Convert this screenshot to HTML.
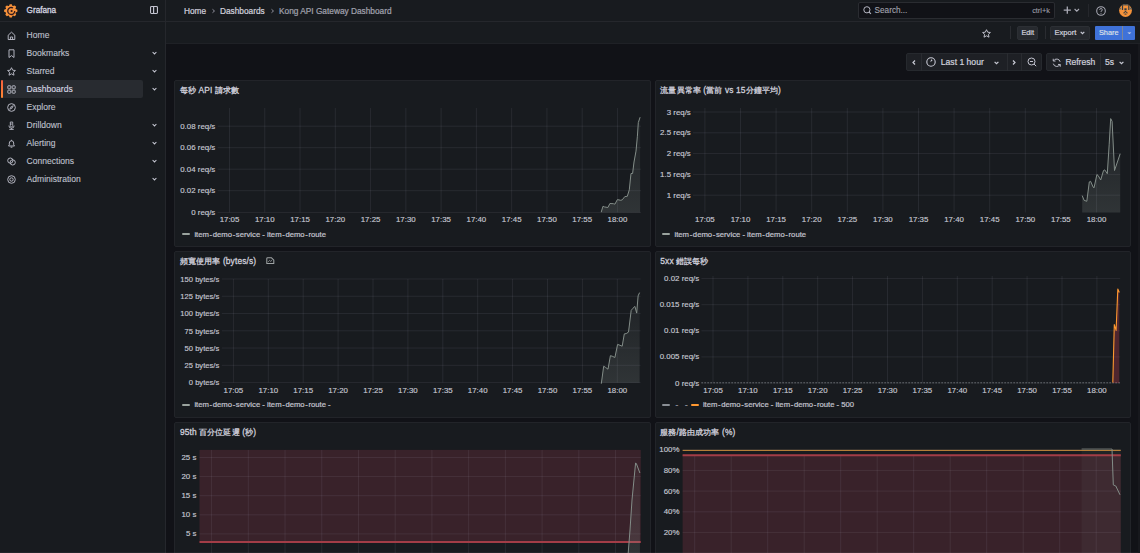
<!DOCTYPE html>
<html><head><meta charset="utf-8"><style>
*{box-sizing:border-box;margin:0;padding:0}
html,body{width:1140px;height:553px;overflow:hidden;background:#111217;font-family:"Liberation Sans",sans-serif;color:#ccccdc}
.t{position:absolute;white-space:nowrap;line-height:1}
.a{position:absolute}
svg{position:absolute;overflow:visible}
</style></head><body>
<div class="a" style="left:0;top:0;width:1140px;height:22px;background:#181b1f"></div>
<div class="a" style="left:0;top:21px;width:1140px;height:1px;background:#25272c"></div>
<div class="a" style="left:0;top:22px;width:165px;height:531px;background:#181b1f"></div>
<div class="a" style="left:165px;top:0;width:1px;height:553px;background:#25272c"></div>
<div class="a" style="left:166px;top:22px;width:974px;height:22px;background:#181b1f"></div>
<div class="a" style="left:166px;top:43px;width:974px;height:1px;background:#1f2126"></div>
<svg style="left:3.9px;top:3.8px" width="13.5" height="13.5" viewBox="0 0 27 27">
<path fill="#f7923a" d="M9.94 3.83 L11.40 0.36 L15.60 0.36 L17.06 3.83 L17.90 4.17 L21.38 2.76 L24.34 5.72 L22.93 9.20 L23.27 10.04 L26.74 11.50 L26.74 15.70 L23.27 17.16 L22.93 18.00 L24.34 21.48 L21.38 24.44 L17.90 23.03 L17.06 23.37 L15.60 26.84 L11.40 26.84 L9.94 23.37 L9.10 23.03 L5.62 24.44 L2.66 21.48 L4.07 18.00 L3.73 17.16 L0.26 15.70 L0.26 11.50 L3.73 10.04 L4.07 9.20 L2.66 5.72 L5.62 2.76 L9.10 4.17 Z"/>
<path d="M18 7.94 A7 7 0 1 0 21.5 14" fill="none" stroke="#32191d" stroke-width="2.6"/>
<circle cx="15.2" cy="14" r="2.2" fill="#32191d"/>
</svg>
<div class="t" style="left:26.60px;top:7.26px;font-size:8.2px;color:#d5d5e0;font-weight:normal;-webkit-text-stroke:0.3px #d5d5e0;">Grafana</div>
<svg style="left:150.2px;top:6.2px" width="8" height="8" viewBox="0 0 8 8"><rect x="0.55" y="0.55" width="6.9" height="6.9" rx="0.9" fill="none" stroke="#c3c4d0" stroke-width="1.1"/><line x1="3.6" y1="0.6" x2="3.6" y2="7.4" stroke="#c3c4d0" stroke-width="1.2"/></svg>
<div class="t" style="left:184.00px;top:7.17px;font-size:8.3px;color:#d0d0dc;font-weight:normal;-webkit-text-stroke:0.22px #d0d0dc;">Home</div>
<svg style="left:211.5px;top:9px" width="3" height="4" viewBox="0 0 3 4"><path d="M0.5 0.3 L2.5 2 L0.5 3.7" fill="none" stroke="#9a9aa6" stroke-width="0.9"/></svg>
<div class="t" style="left:220.00px;top:6.97px;font-size:8.3px;color:#d0d0dc;font-weight:normal;-webkit-text-stroke:0.22px #d0d0dc;">Dashboards</div>
<svg style="left:270.5px;top:9px" width="3" height="4" viewBox="0 0 3 4"><path d="M0.5 0.3 L2.5 2 L0.5 3.7" fill="none" stroke="#9a9aa6" stroke-width="0.9"/></svg>
<div class="t" style="left:279.00px;top:6.97px;font-size:8.3px;color:#a0a1ad;font-weight:normal;-webkit-text-stroke:0.22px #a0a1ad;">Kong API Gateway Dashboard</div>
<div class="a" style="left:858px;top:1.5px;width:196.5px;height:17.5px;background:#111217;border:1px solid #2a2c31;border-radius:2px"></div>
<svg style="left:863px;top:6px" width="9" height="9" viewBox="0 0 9 9"><circle cx="3.9" cy="3.8" r="3.1" fill="none" stroke="#b5b6c2" stroke-width="1"/><line x1="6.1" y1="6" x2="7.9" y2="7.8" stroke="#b5b6c2" stroke-width="1.1"/></svg>
<div class="t" style="left:874.60px;top:6.56px;font-size:8.2px;color:#a3a4af;font-weight:normal;-webkit-text-stroke:0.12px #a3a4af;">Search...</div>
<div class="t" style="right:90.00px;top:6.74px;font-size:7.4px;color:#9d9ea9;font-weight:normal;text-align:right;-webkit-text-stroke:0.1px #9d9ea9;">ctrl+k</div>
<svg style="left:1063px;top:6px" width="18" height="9" viewBox="0 0 18 9"><path d="M4.3 0.5 V7.8 M0.7 4.1 H7.9" stroke="#a9aab5" stroke-width="1.3"/><path d="M11.6 3 L13.8 5.2 L16 3" fill="none" stroke="#a9aab5" stroke-width="1.1"/></svg>
<div class="a" style="left:1088px;top:4px;width:1px;height:13px;background:#25272c"></div>
<svg style="left:1096px;top:5.5px" width="10" height="10" viewBox="0 0 10 10"><circle cx="5" cy="5" r="4.3" fill="none" stroke="#a9aab5" stroke-width="1.05"/><path d="M3.7 3.9 A1.3 1.3 0 1 1 5 5.1 V5.9" fill="none" stroke="#a9aab5" stroke-width="0.9"/><circle cx="5" cy="7.3" r="0.5" fill="#a9aab5"/></svg>
<svg style="left:1119.3px;top:3.6px" width="13" height="13" viewBox="0 0 13 13"><defs><clipPath id="avc"><circle cx="6.5" cy="6.5" r="6.4"/></clipPath></defs>
<g clip-path="url(#avc)"><rect width="13" height="13" fill="#f4923a"/>
<rect x="0" y="0" width="13" height="1.4" fill="#3a4a55"/>
<rect x="2.9" y="1.2" width="1.2" height="4.8" fill="#2e3a44"/><rect x="9.2" y="1.2" width="1.2" height="4.8" fill="#2e3a44"/>
<rect x="0.5" y="3.8" width="1.6" height="1.6" fill="#5a6a70"/><rect x="10.9" y="3.8" width="1.6" height="1.6" fill="#5a6a70"/>
<rect x="5.4" y="4.3" width="2.2" height="2" fill="#2e3a44"/>
<path d="M3.8 9.2 L6.5 6.8 L9.2 9.2 L8 9.2 L6.5 8 L5 9.2 Z" fill="#2e3a44"/>
<rect x="5.5" y="9.6" width="2" height="1" fill="#2e3a44"/>
<rect x="0" y="10.8" width="2.2" height="2.2" fill="#6a2a2a"/>
</g></svg>
<div class="a" style="left:1px;top:80px;width:142px;height:18px;background:#282b30;border-radius:2px"></div>
<div class="a" style="left:1px;top:80px;width:2px;height:18px;background:linear-gradient(#f55f3e,#ff8833);border-radius:1px"></div>
<svg style="left:6.5px;top:30.7px" width="9" height="9" viewBox="0 0 9 9"><path d="M1.2 8.5 V4.2 L4.5 1.2 L7.8 4.2 V8.5 Z M3.4 8.5 V6 H5.6 V8.5" fill="none" stroke="#b9bac6" stroke-width="0.95" stroke-linejoin="round"/></svg>
<div class="t" style="left:26.60px;top:30.86px;font-size:8.55px;color:#bfc0cc;font-weight:normal;-webkit-text-stroke:0.12px #bfc0cc;">Home</div>
<svg style="left:6.5px;top:48.7px" width="9" height="9" viewBox="0 0 9 9"><path d="M2 0.8 H7 V8.5 L4.5 6.6 L2 8.5 Z" fill="none" stroke="#b9bac6" stroke-width="0.95" stroke-linejoin="round"/></svg>
<div class="t" style="left:26.60px;top:48.86px;font-size:8.55px;color:#bfc0cc;font-weight:normal;-webkit-text-stroke:0.12px #bfc0cc;">Bookmarks</div>
<svg style="left:152.2px;top:51.0px" width="5" height="4" viewBox="0 0 5 4"><path d="M0.6 1 L2.5 2.9 L4.4 1" fill="none" stroke="#c9cad5" stroke-width="1.05"/></svg>
<svg style="left:6.5px;top:66.7px" width="9" height="9" viewBox="0 0 9 9"><path d="M4.5 0.7 L5.7 3.2 L8.4 3.5 L6.4 5.3 L7 8.2 L4.5 6.8 L2 8.2 L2.6 5.3 L0.6 3.5 L3.3 3.2 Z" fill="none" stroke="#b9bac6" stroke-width="0.95" stroke-linejoin="round"/></svg>
<div class="t" style="left:26.60px;top:66.86px;font-size:8.55px;color:#bfc0cc;font-weight:normal;-webkit-text-stroke:0.12px #bfc0cc;">Starred</div>
<svg style="left:152.2px;top:69.0px" width="5" height="4" viewBox="0 0 5 4"><path d="M0.6 1 L2.5 2.9 L4.4 1" fill="none" stroke="#c9cad5" stroke-width="1.05"/></svg>
<svg style="left:6.5px;top:84.7px" width="9" height="9" viewBox="0 0 9 9"><g fill="none" stroke="#b9bac6" stroke-width="0.95"><rect x="0.8" y="0.8" width="3" height="3" rx="0.5"/><rect x="5.2" y="0.8" width="3" height="3" rx="0.5"/><rect x="0.8" y="5.2" width="3" height="3" rx="0.5"/><rect x="5.2" y="5.2" width="3" height="3" rx="0.5"/></g></svg>
<div class="t" style="left:26.60px;top:84.86px;font-size:8.55px;color:#d8d8e3;font-weight:normal;-webkit-text-stroke:0.12px #d8d8e3;">Dashboards</div>
<svg style="left:152.2px;top:87.0px" width="5" height="4" viewBox="0 0 5 4"><path d="M0.6 1 L2.5 2.9 L4.4 1" fill="none" stroke="#c9cad5" stroke-width="1.05"/></svg>
<svg style="left:6.5px;top:102.7px" width="9" height="9" viewBox="0 0 9 9"><circle cx="4.5" cy="4.5" r="3.85" fill="none" stroke="#b9bac6" stroke-width="0.95"/><path d="M6.4 2.6 L5.2 5.2 L2.6 6.4 L3.8 3.8 Z" fill="#b9bac6" fill-opacity="0.55" stroke="#b9bac6" stroke-width="0.6" stroke-linejoin="round"/></svg>
<div class="t" style="left:26.60px;top:102.86px;font-size:8.55px;color:#bfc0cc;font-weight:normal;-webkit-text-stroke:0.12px #bfc0cc;">Explore</div>
<svg style="left:6.5px;top:120.7px" width="9" height="9" viewBox="0 0 9 9"><path d="M3.3 1 H5.7 V4.6 A1.2 1.2 0 0 1 3.3 4.6 Z M3.3 2.3 H4.5 M3.3 3.5 H4.5" fill="none" stroke="#b9bac6" stroke-width="0.85" stroke-linejoin="round"/><path d="M1.9 4.6 A2.6 2.6 0 0 0 7.1 4.6 M4.5 7.2 V8.2 M2.3 8.4 H6.7" fill="none" stroke="#b9bac6" stroke-width="0.9"/></svg>
<div class="t" style="left:26.60px;top:120.86px;font-size:8.55px;color:#bfc0cc;font-weight:normal;-webkit-text-stroke:0.12px #bfc0cc;">Drilldown</div>
<svg style="left:152.2px;top:123.0px" width="5" height="4" viewBox="0 0 5 4"><path d="M0.6 1 L2.5 2.9 L4.4 1" fill="none" stroke="#c9cad5" stroke-width="1.05"/></svg>
<svg style="left:6.5px;top:138.7px" width="9" height="9" viewBox="0 0 9 9"><path d="M1.5 7 H7.5 L6.7 5.8 V4 A2.2 2.2 0 0 0 2.3 4 V5.8 Z M3.6 8.2 H5.4 M4.5 0.8 V1.8" fill="none" stroke="#b9bac6" stroke-width="0.95" stroke-linejoin="round"/></svg>
<div class="t" style="left:26.60px;top:138.86px;font-size:8.55px;color:#bfc0cc;font-weight:normal;-webkit-text-stroke:0.12px #bfc0cc;">Alerting</div>
<svg style="left:152.2px;top:141.0px" width="5" height="4" viewBox="0 0 5 4"><path d="M0.6 1 L2.5 2.9 L4.4 1" fill="none" stroke="#c9cad5" stroke-width="1.05"/></svg>
<svg style="left:6.5px;top:156.7px" width="9" height="9" viewBox="0 0 9 9"><circle cx="3.3" cy="3.6" r="2.6" fill="none" stroke="#b9bac6" stroke-width="0.95"/><circle cx="5.7" cy="5.4" r="2.6" fill="none" stroke="#b9bac6" stroke-width="0.95"/></svg>
<div class="t" style="left:26.60px;top:156.86px;font-size:8.55px;color:#bfc0cc;font-weight:normal;-webkit-text-stroke:0.12px #bfc0cc;">Connections</div>
<svg style="left:152.2px;top:159.0px" width="5" height="4" viewBox="0 0 5 4"><path d="M0.6 1 L2.5 2.9 L4.4 1" fill="none" stroke="#c9cad5" stroke-width="1.05"/></svg>
<svg style="left:6.5px;top:174.7px" width="9" height="9" viewBox="0 0 9 9"><circle cx="4.5" cy="4.5" r="3.8" fill="none" stroke="#b9bac6" stroke-width="0.95"/><circle cx="4.5" cy="4.5" r="1.7" fill="none" stroke="#b9bac6" stroke-width="0.95"/></svg>
<div class="t" style="left:26.60px;top:174.86px;font-size:8.55px;color:#bfc0cc;font-weight:normal;-webkit-text-stroke:0.12px #bfc0cc;">Administration</div>
<svg style="left:152.2px;top:177.0px" width="5" height="4" viewBox="0 0 5 4"><path d="M0.6 1 L2.5 2.9 L4.4 1" fill="none" stroke="#c9cad5" stroke-width="1.05"/></svg>
<svg style="left:981.5px;top:28.5px" width="9" height="9" viewBox="0 0 9 9"><path d="M4.5 0.7 L5.7 3.2 L8.4 3.5 L6.4 5.3 L7 8.2 L4.5 6.8 L2 8.2 L2.6 5.3 L0.6 3.5 L3.3 3.2 Z" fill="none" stroke="#c3c4d0" stroke-width="0.95" stroke-linejoin="round"/></svg>
<div class="a" style="left:1010px;top:26px;width:1px;height:13px;background:#2a2c31"></div>
<div class="a" style="left:1017px;top:26px;width:21px;height:14px;background:#272a2f;border:1px solid #2c2f34;border-radius:2px"></div>
<div class="t" style="left:1021.40px;top:29.42px;font-size:7.3px;color:#d0d0dc;font-weight:normal;-webkit-text-stroke:0.22px #d0d0dc;">Edit</div>
<div class="a" style="left:1045px;top:26px;width:1px;height:13px;background:#2a2c31"></div>
<div class="a" style="left:1050px;top:26px;width:40px;height:14px;background:#25282d;border:1px solid #2c2f34;border-radius:2px"></div>
<div class="t" style="left:1054.60px;top:29.25px;font-size:7.5px;color:#d0d0dc;font-weight:normal;-webkit-text-stroke:0.22px #d0d0dc;">Export</div>
<svg style="left:1080px;top:30.8px" width="5" height="4" viewBox="0 0 5 4"><path d="M0.7 0.8 L2.5 2.6 L4.3 0.8" fill="none" stroke="#c9cad5" stroke-width="1.2"/></svg>
<div class="a" style="left:1094.5px;top:26px;width:28px;height:14px;background:#3f72d9;border-radius:1px 0 0 1px"></div>
<div class="a" style="left:1123px;top:26px;width:12px;height:14px;background:#3f72d9;border-radius:0 1px 1px 0"></div>
<div class="a" style="left:1122.3px;top:26px;width:0.8px;height:14px;background:#7d8799"></div>
<div class="t" style="left:1099.00px;top:29.42px;font-size:7.3px;color:#dfe0e8;font-weight:normal;-webkit-text-stroke:0.18px #dfe0e8;">Share</div>
<svg style="left:1126.8px;top:32px" width="5" height="3" viewBox="0 0 5 3"><path d="M0.4 0.4 L4.4 0.4 L2.4 2.1 Z" fill="#dfe0e8"/></svg>
<div class="a" style="left:906px;top:53px;width:136px;height:18px;background:#1e2025;border:1px solid #26292e;border-radius:2px"></div>
<div class="a" style="left:921.3px;top:53px;width:1px;height:18px;background:#2a2c31"></div>
<div class="a" style="left:1006.6px;top:53px;width:1px;height:18px;background:#2a2c31"></div>
<div class="a" style="left:1021.3px;top:53px;width:1px;height:18px;background:#2a2c31"></div>
<svg style="left:911.5px;top:59.5px" width="4" height="5" viewBox="0 0 4 5"><path d="M3 0.5 L1 2.5 L3 4.5" fill="none" stroke="#c9cad5" stroke-width="1.2"/></svg>
<svg style="left:926.1px;top:57.3px" width="10" height="10" viewBox="0 0 10 10"><circle cx="5" cy="5" r="4.2" fill="none" stroke="#c9cad5" stroke-width="1.1"/><path d="M4.4 5.3 L5.1 2.3 L6.6 3.2 Z" fill="#c9cad5"/></svg>
<div class="t" style="left:940.80px;top:57.52px;font-size:8.6px;color:#d0d0dc;font-weight:normal;-webkit-text-stroke:0.22px #d0d0dc;">Last 1 hour</div>
<svg style="left:993.5px;top:61px" width="5" height="4" viewBox="0 0 5 4"><path d="M0.6 0.8 L2.5 2.7 L4.4 0.8" fill="none" stroke="#c9cad5" stroke-width="1.2"/></svg>
<svg style="left:1012px;top:59.5px" width="4" height="5" viewBox="0 0 4 5"><path d="M1 0.5 L3 2.5 L1 4.5" fill="none" stroke="#c9cad5" stroke-width="1.2"/></svg>
<svg style="left:1026.5px;top:57px" width="10" height="10" viewBox="0 0 10 10"><circle cx="4.5" cy="4.5" r="3.5" fill="none" stroke="#c3c4d0" stroke-width="1"/><line x1="3" y1="4.5" x2="6" y2="4.5" stroke="#c3c4d0" stroke-width="1"/><line x1="7" y1="7" x2="9.2" y2="9.2" stroke="#c3c4d0" stroke-width="1"/></svg>
<div class="a" style="left:1046px;top:53px;width:84.5px;height:18px;background:#1e2025;border:1px solid #26292e;border-radius:2px"></div>
<div class="a" style="left:1100px;top:53px;width:1px;height:18px;background:#2a2c31"></div>
<svg style="left:1051.5px;top:57.5px" width="9.5" height="9.5" viewBox="0 0 10 10"><path d="M8.6 4 A3.8 3.8 0 0 0 1.6 3 M1.4 6 A3.8 3.8 0 0 0 8.4 7" fill="none" stroke="#c3c4d0" stroke-width="1"/><path d="M1.3 0.8 V3.2 H3.7 M8.7 9.2 V6.8 H6.3" fill="none" stroke="#c3c4d0" stroke-width="1"/></svg>
<div class="t" style="left:1065.40px;top:57.60px;font-size:8.5px;color:#d0d0dc;font-weight:normal;-webkit-text-stroke:0.22px #d0d0dc;">Refresh</div>
<div class="t" style="left:1105.00px;top:57.60px;font-size:8.5px;color:#d0d0dc;font-weight:normal;-webkit-text-stroke:0.22px #d0d0dc;">5s</div>
<svg style="left:1118.5px;top:61px" width="5" height="4" viewBox="0 0 5 4"><path d="M0.6 0.8 L2.5 2.7 L4.4 0.8" fill="none" stroke="#c9cad5" stroke-width="1.2"/></svg>
<div class="a" style="left:174px;top:80px;width:477px;height:167px;background:#181b1f;border:1px solid #222429;border-radius:2px"></div>
<div class="t" style="left:179.90px;top:85.89px;font-size:8.4px;color:#d0d0dc;font-weight:normal;-webkit-text-stroke:0.28px #d0d0dc;letter-spacing:0.12px;">每秒 API 請求數</div>
<svg style="left:0;top:0" width="1140" height="553" viewBox="0 0 1140 553"><defs><linearGradient id="gf" x1="0" y1="0" x2="0" y2="1"><stop offset="0" stop-color="#8f9994" stop-opacity="0.05"/><stop offset="1" stop-color="#8f9994" stop-opacity="0.2"/></linearGradient></defs><line x1="217.7" y1="126.20" x2="641" y2="126.20" stroke="rgba(204,204,220,0.09)" stroke-width="1"/><line x1="217.7" y1="147.70" x2="641" y2="147.70" stroke="rgba(204,204,220,0.09)" stroke-width="1"/><line x1="217.7" y1="169.20" x2="641" y2="169.20" stroke="rgba(204,204,220,0.09)" stroke-width="1"/><line x1="217.7" y1="190.70" x2="641" y2="190.70" stroke="rgba(204,204,220,0.09)" stroke-width="1"/><line x1="217.7" y1="212.40" x2="641" y2="212.40" stroke="rgba(204,204,220,0.09)" stroke-width="1"/><line x1="229.50" y1="108" x2="229.50" y2="212.4" stroke="rgba(204,204,220,0.09)" stroke-width="1"/><line x1="264.77" y1="108" x2="264.77" y2="212.4" stroke="rgba(204,204,220,0.09)" stroke-width="1"/><line x1="300.04" y1="108" x2="300.04" y2="212.4" stroke="rgba(204,204,220,0.09)" stroke-width="1"/><line x1="335.31" y1="108" x2="335.31" y2="212.4" stroke="rgba(204,204,220,0.09)" stroke-width="1"/><line x1="370.58" y1="108" x2="370.58" y2="212.4" stroke="rgba(204,204,220,0.09)" stroke-width="1"/><line x1="405.85" y1="108" x2="405.85" y2="212.4" stroke="rgba(204,204,220,0.09)" stroke-width="1"/><line x1="441.12" y1="108" x2="441.12" y2="212.4" stroke="rgba(204,204,220,0.09)" stroke-width="1"/><line x1="476.39" y1="108" x2="476.39" y2="212.4" stroke="rgba(204,204,220,0.09)" stroke-width="1"/><line x1="511.66" y1="108" x2="511.66" y2="212.4" stroke="rgba(204,204,220,0.09)" stroke-width="1"/><line x1="546.93" y1="108" x2="546.93" y2="212.4" stroke="rgba(204,204,220,0.09)" stroke-width="1"/><line x1="582.20" y1="108" x2="582.20" y2="212.4" stroke="rgba(204,204,220,0.09)" stroke-width="1"/><line x1="617.47" y1="108" x2="617.47" y2="212.4" stroke="rgba(204,204,220,0.09)" stroke-width="1"/><polygon points="601.2,212.4 601.2,212.2 603.0,206.2 604.4,206.9 607.9,207.5 609.9,203.5 613.4,203.7 614.9,204.2 617.4,199.6 620.8,200.3 622.3,199.8 624.8,196.6 627.3,196.3 629.3,189.8 630.5,178.0 631.0,173.5 632.6,173.5 634.0,162.0 636.0,151.1 637.4,136.2 638.3,122.6 640.1,117.2 640.1,212.4" fill="url(#gf)"/><polyline points="601.2,212.2 603.0,206.2 604.4,206.9 607.9,207.5 609.9,203.5 613.4,203.7 614.9,204.2 617.4,199.6 620.8,200.3 622.3,199.8 624.8,196.6 627.3,196.3 629.3,189.8 630.5,178.0 631.0,173.5 632.6,173.5 634.0,162.0 636.0,151.1 637.4,136.2 638.3,122.6 640.1,117.2" fill="none" stroke="#838d88" stroke-width="1.0" stroke-linejoin="round"/></svg>
<div class="t" style="right:924.70px;top:122.71px;font-size:7.9px;color:#c6c7d2;font-weight:normal;text-align:right;-webkit-text-stroke:0.15px #c6c7d2;">0.08 req/s</div>
<div class="t" style="right:924.70px;top:144.21px;font-size:7.9px;color:#c6c7d2;font-weight:normal;text-align:right;-webkit-text-stroke:0.15px #c6c7d2;">0.06 req/s</div>
<div class="t" style="right:924.70px;top:165.71px;font-size:7.9px;color:#c6c7d2;font-weight:normal;text-align:right;-webkit-text-stroke:0.15px #c6c7d2;">0.04 req/s</div>
<div class="t" style="right:924.70px;top:187.21px;font-size:7.9px;color:#c6c7d2;font-weight:normal;text-align:right;-webkit-text-stroke:0.15px #c6c7d2;">0.02 req/s</div>
<div class="t" style="right:924.70px;top:208.91px;font-size:7.9px;color:#c6c7d2;font-weight:normal;text-align:right;-webkit-text-stroke:0.15px #c6c7d2;">0 req/s</div>
<div class="t" style="left:129.50px;width:200px;top:215.61px;font-size:7.9px;color:#c6c7d2;font-weight:normal;text-align:center;-webkit-text-stroke:0.15px #c6c7d2;">17:05</div>
<div class="t" style="left:164.77px;width:200px;top:215.61px;font-size:7.9px;color:#c6c7d2;font-weight:normal;text-align:center;-webkit-text-stroke:0.15px #c6c7d2;">17:10</div>
<div class="t" style="left:200.04px;width:200px;top:215.61px;font-size:7.9px;color:#c6c7d2;font-weight:normal;text-align:center;-webkit-text-stroke:0.15px #c6c7d2;">17:15</div>
<div class="t" style="left:235.31px;width:200px;top:215.61px;font-size:7.9px;color:#c6c7d2;font-weight:normal;text-align:center;-webkit-text-stroke:0.15px #c6c7d2;">17:20</div>
<div class="t" style="left:270.58px;width:200px;top:215.61px;font-size:7.9px;color:#c6c7d2;font-weight:normal;text-align:center;-webkit-text-stroke:0.15px #c6c7d2;">17:25</div>
<div class="t" style="left:305.85px;width:200px;top:215.61px;font-size:7.9px;color:#c6c7d2;font-weight:normal;text-align:center;-webkit-text-stroke:0.15px #c6c7d2;">17:30</div>
<div class="t" style="left:341.12px;width:200px;top:215.61px;font-size:7.9px;color:#c6c7d2;font-weight:normal;text-align:center;-webkit-text-stroke:0.15px #c6c7d2;">17:35</div>
<div class="t" style="left:376.39px;width:200px;top:215.61px;font-size:7.9px;color:#c6c7d2;font-weight:normal;text-align:center;-webkit-text-stroke:0.15px #c6c7d2;">17:40</div>
<div class="t" style="left:411.66px;width:200px;top:215.61px;font-size:7.9px;color:#c6c7d2;font-weight:normal;text-align:center;-webkit-text-stroke:0.15px #c6c7d2;">17:45</div>
<div class="t" style="left:446.93px;width:200px;top:215.61px;font-size:7.9px;color:#c6c7d2;font-weight:normal;text-align:center;-webkit-text-stroke:0.15px #c6c7d2;">17:50</div>
<div class="t" style="left:482.20px;width:200px;top:215.61px;font-size:7.9px;color:#c6c7d2;font-weight:normal;text-align:center;-webkit-text-stroke:0.15px #c6c7d2;">17:55</div>
<div class="t" style="left:517.47px;width:200px;top:215.61px;font-size:7.9px;color:#c6c7d2;font-weight:normal;text-align:center;-webkit-text-stroke:0.15px #c6c7d2;">18:00</div>
<div class="a" style="left:182px;top:233.0px;width:8px;height:2px;background:#9aa39e;border-radius:1px"></div>
<div class="t" style="left:194.40px;top:230.88px;font-size:7.7px;color:#c0c1cc;font-weight:normal;-webkit-text-stroke:0.22px #c0c1cc;">item&#8202;-&#8202;demo&#8202;-&#8202;service - item&#8202;-&#8202;demo&#8202;-&#8202;route</div>
<div class="a" style="left:655px;top:80px;width:475.5px;height:167px;background:#181b1f;border:1px solid #222429;border-radius:2px"></div>
<div class="t" style="left:660.30px;top:85.89px;font-size:8.4px;color:#d0d0dc;font-weight:normal;-webkit-text-stroke:0.28px #d0d0dc;letter-spacing:0.12px;">流量異常率 (當前 vs 15分鐘平均)</div>
<svg style="left:0;top:0" width="1140" height="553" viewBox="0 0 1140 553"><defs><linearGradient id="gf" x1="0" y1="0" x2="0" y2="1"><stop offset="0" stop-color="#8f9994" stop-opacity="0.05"/><stop offset="1" stop-color="#8f9994" stop-opacity="0.2"/></linearGradient></defs><line x1="693" y1="112.00" x2="1120.2" y2="112.00" stroke="rgba(204,204,220,0.09)" stroke-width="1"/><line x1="693" y1="132.80" x2="1120.2" y2="132.80" stroke="rgba(204,204,220,0.09)" stroke-width="1"/><line x1="693" y1="153.60" x2="1120.2" y2="153.60" stroke="rgba(204,204,220,0.09)" stroke-width="1"/><line x1="693" y1="174.40" x2="1120.2" y2="174.40" stroke="rgba(204,204,220,0.09)" stroke-width="1"/><line x1="693" y1="195.20" x2="1120.2" y2="195.20" stroke="rgba(204,204,220,0.09)" stroke-width="1"/><line x1="704.90" y1="108" x2="704.90" y2="212.5" stroke="rgba(204,204,220,0.09)" stroke-width="1"/><line x1="740.50" y1="108" x2="740.50" y2="212.5" stroke="rgba(204,204,220,0.09)" stroke-width="1"/><line x1="776.10" y1="108" x2="776.10" y2="212.5" stroke="rgba(204,204,220,0.09)" stroke-width="1"/><line x1="811.70" y1="108" x2="811.70" y2="212.5" stroke="rgba(204,204,220,0.09)" stroke-width="1"/><line x1="847.30" y1="108" x2="847.30" y2="212.5" stroke="rgba(204,204,220,0.09)" stroke-width="1"/><line x1="882.90" y1="108" x2="882.90" y2="212.5" stroke="rgba(204,204,220,0.09)" stroke-width="1"/><line x1="918.50" y1="108" x2="918.50" y2="212.5" stroke="rgba(204,204,220,0.09)" stroke-width="1"/><line x1="954.10" y1="108" x2="954.10" y2="212.5" stroke="rgba(204,204,220,0.09)" stroke-width="1"/><line x1="989.70" y1="108" x2="989.70" y2="212.5" stroke="rgba(204,204,220,0.09)" stroke-width="1"/><line x1="1025.30" y1="108" x2="1025.30" y2="212.5" stroke="rgba(204,204,220,0.09)" stroke-width="1"/><line x1="1060.90" y1="108" x2="1060.90" y2="212.5" stroke="rgba(204,204,220,0.09)" stroke-width="1"/><line x1="1096.50" y1="108" x2="1096.50" y2="212.5" stroke="rgba(204,204,220,0.09)" stroke-width="1"/><polygon points="1082.2,212.5 1082.2,195.6 1084.1,200.3 1086.8,201.3 1089.3,181.9 1090.6,181.3 1093.1,187.0 1094.0,187.9 1096.9,174.6 1098.2,175.6 1100.7,180.0 1103.5,170.5 1104.8,169.9 1107.3,173.7 1109.2,144.2 1110.7,118.6 1112.1,121.4 1114.5,170.5 1120.2,153.7 1120.2,212.5" fill="url(#gf)"/><polyline points="1082.2,195.6 1084.1,200.3 1086.8,201.3 1089.3,181.9 1090.6,181.3 1093.1,187.0 1094.0,187.9 1096.9,174.6 1098.2,175.6 1100.7,180.0 1103.5,170.5 1104.8,169.9 1107.3,173.7 1109.2,144.2 1110.7,118.6 1112.1,121.4 1114.5,170.5 1120.2,153.7" fill="none" stroke="#838d88" stroke-width="1.0" stroke-linejoin="round"/></svg>
<div class="t" style="right:449.20px;top:108.51px;font-size:7.9px;color:#c6c7d2;font-weight:normal;text-align:right;-webkit-text-stroke:0.15px #c6c7d2;">3 req/s</div>
<div class="t" style="right:449.20px;top:129.31px;font-size:7.9px;color:#c6c7d2;font-weight:normal;text-align:right;-webkit-text-stroke:0.15px #c6c7d2;">2.5 req/s</div>
<div class="t" style="right:449.20px;top:150.11px;font-size:7.9px;color:#c6c7d2;font-weight:normal;text-align:right;-webkit-text-stroke:0.15px #c6c7d2;">2 req/s</div>
<div class="t" style="right:449.20px;top:170.91px;font-size:7.9px;color:#c6c7d2;font-weight:normal;text-align:right;-webkit-text-stroke:0.15px #c6c7d2;">1.5 req/s</div>
<div class="t" style="right:449.20px;top:191.71px;font-size:7.9px;color:#c6c7d2;font-weight:normal;text-align:right;-webkit-text-stroke:0.15px #c6c7d2;">1 req/s</div>
<div class="t" style="left:604.90px;width:200px;top:215.61px;font-size:7.9px;color:#c6c7d2;font-weight:normal;text-align:center;-webkit-text-stroke:0.15px #c6c7d2;">17:05</div>
<div class="t" style="left:640.50px;width:200px;top:215.61px;font-size:7.9px;color:#c6c7d2;font-weight:normal;text-align:center;-webkit-text-stroke:0.15px #c6c7d2;">17:10</div>
<div class="t" style="left:676.10px;width:200px;top:215.61px;font-size:7.9px;color:#c6c7d2;font-weight:normal;text-align:center;-webkit-text-stroke:0.15px #c6c7d2;">17:15</div>
<div class="t" style="left:711.70px;width:200px;top:215.61px;font-size:7.9px;color:#c6c7d2;font-weight:normal;text-align:center;-webkit-text-stroke:0.15px #c6c7d2;">17:20</div>
<div class="t" style="left:747.30px;width:200px;top:215.61px;font-size:7.9px;color:#c6c7d2;font-weight:normal;text-align:center;-webkit-text-stroke:0.15px #c6c7d2;">17:25</div>
<div class="t" style="left:782.90px;width:200px;top:215.61px;font-size:7.9px;color:#c6c7d2;font-weight:normal;text-align:center;-webkit-text-stroke:0.15px #c6c7d2;">17:30</div>
<div class="t" style="left:818.50px;width:200px;top:215.61px;font-size:7.9px;color:#c6c7d2;font-weight:normal;text-align:center;-webkit-text-stroke:0.15px #c6c7d2;">17:35</div>
<div class="t" style="left:854.10px;width:200px;top:215.61px;font-size:7.9px;color:#c6c7d2;font-weight:normal;text-align:center;-webkit-text-stroke:0.15px #c6c7d2;">17:40</div>
<div class="t" style="left:889.70px;width:200px;top:215.61px;font-size:7.9px;color:#c6c7d2;font-weight:normal;text-align:center;-webkit-text-stroke:0.15px #c6c7d2;">17:45</div>
<div class="t" style="left:925.30px;width:200px;top:215.61px;font-size:7.9px;color:#c6c7d2;font-weight:normal;text-align:center;-webkit-text-stroke:0.15px #c6c7d2;">17:50</div>
<div class="t" style="left:960.90px;width:200px;top:215.61px;font-size:7.9px;color:#c6c7d2;font-weight:normal;text-align:center;-webkit-text-stroke:0.15px #c6c7d2;">17:55</div>
<div class="t" style="left:996.50px;width:200px;top:215.61px;font-size:7.9px;color:#c6c7d2;font-weight:normal;text-align:center;-webkit-text-stroke:0.15px #c6c7d2;">18:00</div>
<div class="a" style="left:662px;top:233.0px;width:8px;height:2px;background:#9aa39e;border-radius:1px"></div>
<div class="t" style="left:674.50px;top:230.88px;font-size:7.7px;color:#c0c1cc;font-weight:normal;-webkit-text-stroke:0.22px #c0c1cc;">item&#8202;-&#8202;demo&#8202;-&#8202;service - item&#8202;-&#8202;demo&#8202;-&#8202;route</div>
<div class="a" style="left:174px;top:251px;width:477px;height:167px;background:#181b1f;border:1px solid #222429;border-radius:2px"></div>
<div class="t" style="left:179.90px;top:256.89px;font-size:8.4px;color:#d0d0dc;font-weight:normal;-webkit-text-stroke:0.28px #d0d0dc;letter-spacing:0.12px;">頻寬使用率 (bytes/s)</div>
<svg style="left:265.8px;top:256.8px" width="8.5" height="7.3" viewBox="0 0 8.5 7.3"><path d="M0.8 6.6 V1.6 Q0.8 0.7 1.7 0.7 H5.3 L7.8 3.2 V6.6 Z" fill="none" stroke="#9ea3a4" stroke-width="1.05" stroke-linejoin="round"/><path d="M2.2 4.8 L3.6 3.4 L4.6 4.3 L6 3.3" fill="none" stroke="#9ea3a4" stroke-width="0.8"/></svg>
<svg style="left:0;top:0" width="1140" height="553" viewBox="0 0 1140 553"><defs><linearGradient id="gf" x1="0" y1="0" x2="0" y2="1"><stop offset="0" stop-color="#8f9994" stop-opacity="0.05"/><stop offset="1" stop-color="#8f9994" stop-opacity="0.2"/></linearGradient></defs><line x1="221.8" y1="278.98" x2="640.6" y2="278.98" stroke="rgba(204,204,220,0.09)" stroke-width="1"/><line x1="221.8" y1="296.25" x2="640.6" y2="296.25" stroke="rgba(204,204,220,0.09)" stroke-width="1"/><line x1="221.8" y1="313.52" x2="640.6" y2="313.52" stroke="rgba(204,204,220,0.09)" stroke-width="1"/><line x1="221.8" y1="330.79" x2="640.6" y2="330.79" stroke="rgba(204,204,220,0.09)" stroke-width="1"/><line x1="221.8" y1="348.06" x2="640.6" y2="348.06" stroke="rgba(204,204,220,0.09)" stroke-width="1"/><line x1="221.8" y1="365.33" x2="640.6" y2="365.33" stroke="rgba(204,204,220,0.09)" stroke-width="1"/><line x1="221.8" y1="382.60" x2="640.6" y2="382.60" stroke="rgba(204,204,220,0.09)" stroke-width="1"/><line x1="233.40" y1="279" x2="233.40" y2="382.6" stroke="rgba(204,204,220,0.09)" stroke-width="1"/><line x1="268.30" y1="279" x2="268.30" y2="382.6" stroke="rgba(204,204,220,0.09)" stroke-width="1"/><line x1="303.20" y1="279" x2="303.20" y2="382.6" stroke="rgba(204,204,220,0.09)" stroke-width="1"/><line x1="338.10" y1="279" x2="338.10" y2="382.6" stroke="rgba(204,204,220,0.09)" stroke-width="1"/><line x1="373.00" y1="279" x2="373.00" y2="382.6" stroke="rgba(204,204,220,0.09)" stroke-width="1"/><line x1="407.90" y1="279" x2="407.90" y2="382.6" stroke="rgba(204,204,220,0.09)" stroke-width="1"/><line x1="442.80" y1="279" x2="442.80" y2="382.6" stroke="rgba(204,204,220,0.09)" stroke-width="1"/><line x1="477.70" y1="279" x2="477.70" y2="382.6" stroke="rgba(204,204,220,0.09)" stroke-width="1"/><line x1="512.60" y1="279" x2="512.60" y2="382.6" stroke="rgba(204,204,220,0.09)" stroke-width="1"/><line x1="547.50" y1="279" x2="547.50" y2="382.6" stroke="rgba(204,204,220,0.09)" stroke-width="1"/><line x1="582.40" y1="279" x2="582.40" y2="382.6" stroke="rgba(204,204,220,0.09)" stroke-width="1"/><line x1="617.30" y1="279" x2="617.30" y2="382.6" stroke="rgba(204,204,220,0.09)" stroke-width="1"/><polygon points="601.3,382.7 601.3,383.7 603.7,366.2 605.5,367.4 608.0,369.2 610.4,355.7 612.2,356.2 614.9,357.5 617.6,344.4 620.0,345.3 622.2,346.2 624.3,333.9 626.2,333.6 628.5,332.1 631.2,310.4 633.0,308.2 634.9,306.4 636.7,313.1 638.1,295.9 639.6,292.6 639.6,382.7" fill="url(#gf)"/><polyline points="601.3,383.7 603.7,366.2 605.5,367.4 608.0,369.2 610.4,355.7 612.2,356.2 614.9,357.5 617.6,344.4 620.0,345.3 622.2,346.2 624.3,333.9 626.2,333.6 628.5,332.1 631.2,310.4 633.0,308.2 634.9,306.4 636.7,313.1 638.1,295.9 639.6,292.6" fill="none" stroke="#838d88" stroke-width="1.0" stroke-linejoin="round"/></svg>
<div class="t" style="right:920.80px;top:275.75px;font-size:7.6px;color:#c6c7d2;font-weight:normal;text-align:right;-webkit-text-stroke:0.15px #c6c7d2;">150 bytes/s</div>
<div class="t" style="right:920.80px;top:293.02px;font-size:7.6px;color:#c6c7d2;font-weight:normal;text-align:right;-webkit-text-stroke:0.15px #c6c7d2;">125 bytes/s</div>
<div class="t" style="right:920.80px;top:310.29px;font-size:7.6px;color:#c6c7d2;font-weight:normal;text-align:right;-webkit-text-stroke:0.15px #c6c7d2;">100 bytes/s</div>
<div class="t" style="right:920.80px;top:327.56px;font-size:7.6px;color:#c6c7d2;font-weight:normal;text-align:right;-webkit-text-stroke:0.15px #c6c7d2;">75 bytes/s</div>
<div class="t" style="right:920.80px;top:344.83px;font-size:7.6px;color:#c6c7d2;font-weight:normal;text-align:right;-webkit-text-stroke:0.15px #c6c7d2;">50 bytes/s</div>
<div class="t" style="right:920.80px;top:362.10px;font-size:7.6px;color:#c6c7d2;font-weight:normal;text-align:right;-webkit-text-stroke:0.15px #c6c7d2;">25 bytes/s</div>
<div class="t" style="right:920.80px;top:379.37px;font-size:7.6px;color:#c6c7d2;font-weight:normal;text-align:right;-webkit-text-stroke:0.15px #c6c7d2;">0 bytes/s</div>
<div class="t" style="left:133.40px;width:200px;top:387.11px;font-size:7.9px;color:#c6c7d2;font-weight:normal;text-align:center;-webkit-text-stroke:0.15px #c6c7d2;">17:05</div>
<div class="t" style="left:168.30px;width:200px;top:387.11px;font-size:7.9px;color:#c6c7d2;font-weight:normal;text-align:center;-webkit-text-stroke:0.15px #c6c7d2;">17:10</div>
<div class="t" style="left:203.20px;width:200px;top:387.11px;font-size:7.9px;color:#c6c7d2;font-weight:normal;text-align:center;-webkit-text-stroke:0.15px #c6c7d2;">17:15</div>
<div class="t" style="left:238.10px;width:200px;top:387.11px;font-size:7.9px;color:#c6c7d2;font-weight:normal;text-align:center;-webkit-text-stroke:0.15px #c6c7d2;">17:20</div>
<div class="t" style="left:273.00px;width:200px;top:387.11px;font-size:7.9px;color:#c6c7d2;font-weight:normal;text-align:center;-webkit-text-stroke:0.15px #c6c7d2;">17:25</div>
<div class="t" style="left:307.90px;width:200px;top:387.11px;font-size:7.9px;color:#c6c7d2;font-weight:normal;text-align:center;-webkit-text-stroke:0.15px #c6c7d2;">17:30</div>
<div class="t" style="left:342.80px;width:200px;top:387.11px;font-size:7.9px;color:#c6c7d2;font-weight:normal;text-align:center;-webkit-text-stroke:0.15px #c6c7d2;">17:35</div>
<div class="t" style="left:377.70px;width:200px;top:387.11px;font-size:7.9px;color:#c6c7d2;font-weight:normal;text-align:center;-webkit-text-stroke:0.15px #c6c7d2;">17:40</div>
<div class="t" style="left:412.60px;width:200px;top:387.11px;font-size:7.9px;color:#c6c7d2;font-weight:normal;text-align:center;-webkit-text-stroke:0.15px #c6c7d2;">17:45</div>
<div class="t" style="left:447.50px;width:200px;top:387.11px;font-size:7.9px;color:#c6c7d2;font-weight:normal;text-align:center;-webkit-text-stroke:0.15px #c6c7d2;">17:50</div>
<div class="t" style="left:482.40px;width:200px;top:387.11px;font-size:7.9px;color:#c6c7d2;font-weight:normal;text-align:center;-webkit-text-stroke:0.15px #c6c7d2;">17:55</div>
<div class="t" style="left:517.30px;width:200px;top:387.11px;font-size:7.9px;color:#c6c7d2;font-weight:normal;text-align:center;-webkit-text-stroke:0.15px #c6c7d2;">18:00</div>
<div class="a" style="left:182px;top:403.7px;width:8px;height:2px;background:#9aa39e;border-radius:1px"></div>
<div class="t" style="left:194.40px;top:401.28px;font-size:7.7px;color:#c0c1cc;font-weight:normal;-webkit-text-stroke:0.22px #c0c1cc;">item&#8202;-&#8202;demo&#8202;-&#8202;service - item&#8202;-&#8202;demo&#8202;-&#8202;route -</div>
<div class="a" style="left:655px;top:251px;width:475.5px;height:167px;background:#181b1f;border:1px solid #222429;border-radius:2px"></div>
<div class="t" style="left:660.30px;top:256.89px;font-size:8.4px;color:#d0d0dc;font-weight:normal;-webkit-text-stroke:0.28px #d0d0dc;letter-spacing:0.12px;">5xx 錯誤每秒</div>
<svg style="left:0;top:0" width="1140" height="553" viewBox="0 0 1140 553"><defs><linearGradient id="gf" x1="0" y1="0" x2="0" y2="1"><stop offset="0" stop-color="#8f9994" stop-opacity="0.05"/><stop offset="1" stop-color="#8f9994" stop-opacity="0.2"/></linearGradient></defs><line x1="701.4" y1="278.60" x2="1120.2" y2="278.60" stroke="rgba(204,204,220,0.09)" stroke-width="1"/><line x1="701.4" y1="304.70" x2="1120.2" y2="304.70" stroke="rgba(204,204,220,0.09)" stroke-width="1"/><line x1="701.4" y1="330.80" x2="1120.2" y2="330.80" stroke="rgba(204,204,220,0.09)" stroke-width="1"/><line x1="701.4" y1="356.90" x2="1120.2" y2="356.90" stroke="rgba(204,204,220,0.09)" stroke-width="1"/><line x1="701.4" y1="383.00" x2="1120.2" y2="383.00" stroke="rgba(204,204,220,0.09)" stroke-width="1"/><line x1="713.00" y1="276" x2="713.00" y2="383" stroke="rgba(204,204,220,0.09)" stroke-width="1"/><line x1="747.90" y1="276" x2="747.90" y2="383" stroke="rgba(204,204,220,0.09)" stroke-width="1"/><line x1="782.80" y1="276" x2="782.80" y2="383" stroke="rgba(204,204,220,0.09)" stroke-width="1"/><line x1="817.70" y1="276" x2="817.70" y2="383" stroke="rgba(204,204,220,0.09)" stroke-width="1"/><line x1="852.60" y1="276" x2="852.60" y2="383" stroke="rgba(204,204,220,0.09)" stroke-width="1"/><line x1="887.50" y1="276" x2="887.50" y2="383" stroke="rgba(204,204,220,0.09)" stroke-width="1"/><line x1="922.40" y1="276" x2="922.40" y2="383" stroke="rgba(204,204,220,0.09)" stroke-width="1"/><line x1="957.30" y1="276" x2="957.30" y2="383" stroke="rgba(204,204,220,0.09)" stroke-width="1"/><line x1="992.20" y1="276" x2="992.20" y2="383" stroke="rgba(204,204,220,0.09)" stroke-width="1"/><line x1="1027.10" y1="276" x2="1027.10" y2="383" stroke="rgba(204,204,220,0.09)" stroke-width="1"/><line x1="1062.00" y1="276" x2="1062.00" y2="383" stroke="rgba(204,204,220,0.09)" stroke-width="1"/><line x1="1096.90" y1="276" x2="1096.90" y2="383" stroke="rgba(204,204,220,0.09)" stroke-width="1"/><line x1="701.4" y1="382.8" x2="1120.2" y2="382.8" stroke="#6d7176" stroke-width="1" stroke-dasharray="1.5 1.5"/><polygon points="1112.8,383 1112.8,382.6 1114.3,324.6 1116.1,330.4 1117.8,289.1 1119.3,292.4 1119.3,383" fill="rgba(242,73,92,0.25)"/><polyline points="1112.8,382.6 1114.3,324.6 1116.1,330.4 1117.8,289.1 1119.3,292.4" fill="none" stroke="#ff9830" stroke-width="1.1" stroke-linejoin="round"/></svg>
<div class="t" style="right:440.80px;top:275.11px;font-size:7.9px;color:#c6c7d2;font-weight:normal;text-align:right;-webkit-text-stroke:0.15px #c6c7d2;">0.02 req/s</div>
<div class="t" style="right:440.80px;top:301.21px;font-size:7.9px;color:#c6c7d2;font-weight:normal;text-align:right;-webkit-text-stroke:0.15px #c6c7d2;">0.015 req/s</div>
<div class="t" style="right:440.80px;top:327.31px;font-size:7.9px;color:#c6c7d2;font-weight:normal;text-align:right;-webkit-text-stroke:0.15px #c6c7d2;">0.01 req/s</div>
<div class="t" style="right:440.80px;top:353.41px;font-size:7.9px;color:#c6c7d2;font-weight:normal;text-align:right;-webkit-text-stroke:0.15px #c6c7d2;">0.005 req/s</div>
<div class="t" style="right:440.80px;top:379.51px;font-size:7.9px;color:#c6c7d2;font-weight:normal;text-align:right;-webkit-text-stroke:0.15px #c6c7d2;">0 req/s</div>
<div class="t" style="left:613.00px;width:200px;top:387.11px;font-size:7.9px;color:#c6c7d2;font-weight:normal;text-align:center;-webkit-text-stroke:0.15px #c6c7d2;">17:05</div>
<div class="t" style="left:647.90px;width:200px;top:387.11px;font-size:7.9px;color:#c6c7d2;font-weight:normal;text-align:center;-webkit-text-stroke:0.15px #c6c7d2;">17:10</div>
<div class="t" style="left:682.80px;width:200px;top:387.11px;font-size:7.9px;color:#c6c7d2;font-weight:normal;text-align:center;-webkit-text-stroke:0.15px #c6c7d2;">17:15</div>
<div class="t" style="left:717.70px;width:200px;top:387.11px;font-size:7.9px;color:#c6c7d2;font-weight:normal;text-align:center;-webkit-text-stroke:0.15px #c6c7d2;">17:20</div>
<div class="t" style="left:752.60px;width:200px;top:387.11px;font-size:7.9px;color:#c6c7d2;font-weight:normal;text-align:center;-webkit-text-stroke:0.15px #c6c7d2;">17:25</div>
<div class="t" style="left:787.50px;width:200px;top:387.11px;font-size:7.9px;color:#c6c7d2;font-weight:normal;text-align:center;-webkit-text-stroke:0.15px #c6c7d2;">17:30</div>
<div class="t" style="left:822.40px;width:200px;top:387.11px;font-size:7.9px;color:#c6c7d2;font-weight:normal;text-align:center;-webkit-text-stroke:0.15px #c6c7d2;">17:35</div>
<div class="t" style="left:857.30px;width:200px;top:387.11px;font-size:7.9px;color:#c6c7d2;font-weight:normal;text-align:center;-webkit-text-stroke:0.15px #c6c7d2;">17:40</div>
<div class="t" style="left:892.20px;width:200px;top:387.11px;font-size:7.9px;color:#c6c7d2;font-weight:normal;text-align:center;-webkit-text-stroke:0.15px #c6c7d2;">17:45</div>
<div class="t" style="left:927.10px;width:200px;top:387.11px;font-size:7.9px;color:#c6c7d2;font-weight:normal;text-align:center;-webkit-text-stroke:0.15px #c6c7d2;">17:50</div>
<div class="t" style="left:962.00px;width:200px;top:387.11px;font-size:7.9px;color:#c6c7d2;font-weight:normal;text-align:center;-webkit-text-stroke:0.15px #c6c7d2;">17:55</div>
<div class="t" style="left:996.90px;width:200px;top:387.11px;font-size:7.9px;color:#c6c7d2;font-weight:normal;text-align:center;-webkit-text-stroke:0.15px #c6c7d2;">18:00</div>
<div class="a" style="left:662px;top:404.0px;width:8px;height:2px;background:#8a8f95;border-radius:1px"></div>
<div class="t" style="left:675.50px;top:400.99px;font-size:8.05px;color:#9a9ba6;font-weight:normal;-webkit-text-stroke:0.22px #9a9ba6;">-&nbsp;&nbsp;&nbsp;-</div>
<div class="a" style="left:691px;top:404.0px;width:7.5px;height:2px;background:#ff9830;border-radius:1px"></div>
<div class="t" style="left:702.90px;top:401.28px;font-size:7.7px;color:#c0c1cc;font-weight:normal;-webkit-text-stroke:0.22px #c0c1cc;">item&#8202;-&#8202;demo&#8202;-&#8202;service - item&#8202;-&#8202;demo&#8202;-&#8202;route - 500</div>
<div class="a" style="left:174px;top:422px;width:477px;height:167px;background:#181b1f;border:1px solid #222429;border-radius:2px"></div>
<div class="t" style="left:179.90px;top:427.89px;font-size:8.4px;color:#d0d0dc;font-weight:normal;-webkit-text-stroke:0.28px #d0d0dc;letter-spacing:0.12px;">95th 百分位延遲 (秒)</div>
<svg style="left:0;top:0" width="1140" height="553" viewBox="0 0 1140 553"><defs><linearGradient id="gf" x1="0" y1="0" x2="0" y2="1"><stop offset="0" stop-color="#8f9994" stop-opacity="0.05"/><stop offset="1" stop-color="#8f9994" stop-opacity="0.2"/></linearGradient></defs><rect x="199.5" y="449.9" width="441.3" height="91.5" fill="#39222a"/><line x1="199.5" y1="457.50" x2="640.8" y2="457.50" stroke="rgba(204,204,220,0.09)" stroke-width="1"/><line x1="199.5" y1="476.60" x2="640.8" y2="476.60" stroke="rgba(204,204,220,0.09)" stroke-width="1"/><line x1="199.5" y1="495.70" x2="640.8" y2="495.70" stroke="rgba(204,204,220,0.09)" stroke-width="1"/><line x1="199.5" y1="514.80" x2="640.8" y2="514.80" stroke="rgba(204,204,220,0.09)" stroke-width="1"/><line x1="199.5" y1="533.90" x2="640.8" y2="533.90" stroke="rgba(204,204,220,0.09)" stroke-width="1"/><line x1="199.5" y1="555.50" x2="640.8" y2="555.50" stroke="rgba(204,204,220,0.09)" stroke-width="1"/><line x1="211.60" y1="449.9" x2="211.60" y2="553" stroke="rgba(204,204,220,0.09)" stroke-width="1"/><line x1="248.32" y1="449.9" x2="248.32" y2="553" stroke="rgba(204,204,220,0.09)" stroke-width="1"/><line x1="285.04" y1="449.9" x2="285.04" y2="553" stroke="rgba(204,204,220,0.09)" stroke-width="1"/><line x1="321.76" y1="449.9" x2="321.76" y2="553" stroke="rgba(204,204,220,0.09)" stroke-width="1"/><line x1="358.48" y1="449.9" x2="358.48" y2="553" stroke="rgba(204,204,220,0.09)" stroke-width="1"/><line x1="395.20" y1="449.9" x2="395.20" y2="553" stroke="rgba(204,204,220,0.09)" stroke-width="1"/><line x1="431.92" y1="449.9" x2="431.92" y2="553" stroke="rgba(204,204,220,0.09)" stroke-width="1"/><line x1="468.64" y1="449.9" x2="468.64" y2="553" stroke="rgba(204,204,220,0.09)" stroke-width="1"/><line x1="505.36" y1="449.9" x2="505.36" y2="553" stroke="rgba(204,204,220,0.09)" stroke-width="1"/><line x1="542.08" y1="449.9" x2="542.08" y2="553" stroke="rgba(204,204,220,0.09)" stroke-width="1"/><line x1="578.80" y1="449.9" x2="578.80" y2="553" stroke="rgba(204,204,220,0.09)" stroke-width="1"/><line x1="615.52" y1="449.9" x2="615.52" y2="553" stroke="rgba(204,204,220,0.09)" stroke-width="1"/><line x1="199.5" y1="541.9" x2="640.8" y2="541.9" stroke="#a33d47" stroke-width="2"/><polygon points="628.2,553 628.2,553.0 630.0,530.0 632.0,500.0 635.6,462.9 636.5,464.0 639.9,473.0 639.9,553" fill="url(#gf)"/><polyline points="628.2,553.0 630.0,530.0 632.0,500.0 635.6,462.9 636.5,464.0 639.9,473.0" fill="none" stroke="#838d88" stroke-width="1.0" stroke-linejoin="round"/></svg>
<div class="t" style="right:943.60px;top:454.01px;font-size:7.9px;color:#c6c7d2;font-weight:normal;text-align:right;-webkit-text-stroke:0.15px #c6c7d2;">25 s</div>
<div class="t" style="right:943.60px;top:473.11px;font-size:7.9px;color:#c6c7d2;font-weight:normal;text-align:right;-webkit-text-stroke:0.15px #c6c7d2;">20 s</div>
<div class="t" style="right:943.60px;top:492.21px;font-size:7.9px;color:#c6c7d2;font-weight:normal;text-align:right;-webkit-text-stroke:0.15px #c6c7d2;">15 s</div>
<div class="t" style="right:943.60px;top:511.31px;font-size:7.9px;color:#c6c7d2;font-weight:normal;text-align:right;-webkit-text-stroke:0.15px #c6c7d2;">10 s</div>
<div class="t" style="right:943.60px;top:530.41px;font-size:7.9px;color:#c6c7d2;font-weight:normal;text-align:right;-webkit-text-stroke:0.15px #c6c7d2;">5 s</div>
<div class="t" style="right:943.60px;top:552.01px;font-size:7.9px;color:#c6c7d2;font-weight:normal;text-align:right;-webkit-text-stroke:0.15px #c6c7d2;">0 s</div>
<div class="t" style="left:111.60px;width:200px;top:556.31px;font-size:7.9px;color:#c6c7d2;font-weight:normal;text-align:center;-webkit-text-stroke:0.15px #c6c7d2;">17:05</div>
<div class="t" style="left:148.32px;width:200px;top:556.31px;font-size:7.9px;color:#c6c7d2;font-weight:normal;text-align:center;-webkit-text-stroke:0.15px #c6c7d2;">17:10</div>
<div class="t" style="left:185.04px;width:200px;top:556.31px;font-size:7.9px;color:#c6c7d2;font-weight:normal;text-align:center;-webkit-text-stroke:0.15px #c6c7d2;">17:15</div>
<div class="t" style="left:221.76px;width:200px;top:556.31px;font-size:7.9px;color:#c6c7d2;font-weight:normal;text-align:center;-webkit-text-stroke:0.15px #c6c7d2;">17:20</div>
<div class="t" style="left:258.48px;width:200px;top:556.31px;font-size:7.9px;color:#c6c7d2;font-weight:normal;text-align:center;-webkit-text-stroke:0.15px #c6c7d2;">17:25</div>
<div class="t" style="left:295.20px;width:200px;top:556.31px;font-size:7.9px;color:#c6c7d2;font-weight:normal;text-align:center;-webkit-text-stroke:0.15px #c6c7d2;">17:30</div>
<div class="t" style="left:331.92px;width:200px;top:556.31px;font-size:7.9px;color:#c6c7d2;font-weight:normal;text-align:center;-webkit-text-stroke:0.15px #c6c7d2;">17:35</div>
<div class="t" style="left:368.64px;width:200px;top:556.31px;font-size:7.9px;color:#c6c7d2;font-weight:normal;text-align:center;-webkit-text-stroke:0.15px #c6c7d2;">17:40</div>
<div class="t" style="left:405.36px;width:200px;top:556.31px;font-size:7.9px;color:#c6c7d2;font-weight:normal;text-align:center;-webkit-text-stroke:0.15px #c6c7d2;">17:45</div>
<div class="t" style="left:442.08px;width:200px;top:556.31px;font-size:7.9px;color:#c6c7d2;font-weight:normal;text-align:center;-webkit-text-stroke:0.15px #c6c7d2;">17:50</div>
<div class="t" style="left:478.80px;width:200px;top:556.31px;font-size:7.9px;color:#c6c7d2;font-weight:normal;text-align:center;-webkit-text-stroke:0.15px #c6c7d2;">17:55</div>
<div class="t" style="left:515.52px;width:200px;top:556.31px;font-size:7.9px;color:#c6c7d2;font-weight:normal;text-align:center;-webkit-text-stroke:0.15px #c6c7d2;">18:00</div>
<div class="a" style="left:655px;top:422px;width:475.5px;height:167px;background:#181b1f;border:1px solid #222429;border-radius:2px"></div>
<div class="t" style="left:660.30px;top:427.89px;font-size:8.4px;color:#d0d0dc;font-weight:normal;-webkit-text-stroke:0.28px #d0d0dc;letter-spacing:0.12px;">服務/路由成功率 (%)</div>
<svg style="left:0;top:0" width="1140" height="553" viewBox="0 0 1140 553"><defs><linearGradient id="gf" x1="0" y1="0" x2="0" y2="1"><stop offset="0" stop-color="#8f9994" stop-opacity="0.05"/><stop offset="1" stop-color="#8f9994" stop-opacity="0.2"/></linearGradient></defs><rect x="682.6" y="455" width="438.2" height="98" fill="#39222a"/><rect x="1081.6" y="449" width="39.2" height="104" fill="rgba(143,153,148,0.07)"/><line x1="682.6" y1="449.70" x2="1120.8" y2="449.70" stroke="rgba(204,204,220,0.09)" stroke-width="1"/><line x1="682.6" y1="470.40" x2="1120.8" y2="470.40" stroke="rgba(204,204,220,0.09)" stroke-width="1"/><line x1="682.6" y1="491.10" x2="1120.8" y2="491.10" stroke="rgba(204,204,220,0.09)" stroke-width="1"/><line x1="682.6" y1="511.80" x2="1120.8" y2="511.80" stroke="rgba(204,204,220,0.09)" stroke-width="1"/><line x1="682.6" y1="532.40" x2="1120.8" y2="532.40" stroke="rgba(204,204,220,0.09)" stroke-width="1"/><line x1="682.6" y1="555.50" x2="1120.8" y2="555.50" stroke="rgba(204,204,220,0.09)" stroke-width="1"/><line x1="694.70" y1="455" x2="694.70" y2="553" stroke="rgba(204,204,220,0.09)" stroke-width="1"/><line x1="731.20" y1="455" x2="731.20" y2="553" stroke="rgba(204,204,220,0.09)" stroke-width="1"/><line x1="767.70" y1="455" x2="767.70" y2="553" stroke="rgba(204,204,220,0.09)" stroke-width="1"/><line x1="804.20" y1="455" x2="804.20" y2="553" stroke="rgba(204,204,220,0.09)" stroke-width="1"/><line x1="840.70" y1="455" x2="840.70" y2="553" stroke="rgba(204,204,220,0.09)" stroke-width="1"/><line x1="877.20" y1="455" x2="877.20" y2="553" stroke="rgba(204,204,220,0.09)" stroke-width="1"/><line x1="913.70" y1="455" x2="913.70" y2="553" stroke="rgba(204,204,220,0.09)" stroke-width="1"/><line x1="950.20" y1="455" x2="950.20" y2="553" stroke="rgba(204,204,220,0.09)" stroke-width="1"/><line x1="986.70" y1="455" x2="986.70" y2="553" stroke="rgba(204,204,220,0.09)" stroke-width="1"/><line x1="1023.20" y1="455" x2="1023.20" y2="553" stroke="rgba(204,204,220,0.09)" stroke-width="1"/><line x1="1059.70" y1="455" x2="1059.70" y2="553" stroke="rgba(204,204,220,0.09)" stroke-width="1"/><line x1="1096.20" y1="455" x2="1096.20" y2="553" stroke="rgba(204,204,220,0.09)" stroke-width="1"/><line x1="682.6" y1="450.4" x2="1120.8" y2="450.4" stroke="#c98a3c" stroke-width="1"/><line x1="682.6" y1="455.2" x2="1120.8" y2="455.2" stroke="#a33d47" stroke-width="2"/><polyline points="1112.0,449.0 1113.3,484.9 1115.8,486.0 1120.0,494.8" fill="none" stroke="#838d88" stroke-width="1.0" stroke-linejoin="round"/><line x1="1081.6" y1="449" x2="1112" y2="449" stroke="#6b706f" stroke-width="1"/></svg>
<div class="t" style="right:460.50px;top:446.21px;font-size:7.9px;color:#c6c7d2;font-weight:normal;text-align:right;-webkit-text-stroke:0.15px #c6c7d2;">100%</div>
<div class="t" style="right:460.50px;top:466.91px;font-size:7.9px;color:#c6c7d2;font-weight:normal;text-align:right;-webkit-text-stroke:0.15px #c6c7d2;">80%</div>
<div class="t" style="right:460.50px;top:487.61px;font-size:7.9px;color:#c6c7d2;font-weight:normal;text-align:right;-webkit-text-stroke:0.15px #c6c7d2;">60%</div>
<div class="t" style="right:460.50px;top:508.31px;font-size:7.9px;color:#c6c7d2;font-weight:normal;text-align:right;-webkit-text-stroke:0.15px #c6c7d2;">40%</div>
<div class="t" style="right:460.50px;top:528.91px;font-size:7.9px;color:#c6c7d2;font-weight:normal;text-align:right;-webkit-text-stroke:0.15px #c6c7d2;">20%</div>
<div class="t" style="right:460.50px;top:552.01px;font-size:7.9px;color:#c6c7d2;font-weight:normal;text-align:right;-webkit-text-stroke:0.15px #c6c7d2;">0%</div>
<div class="t" style="left:594.70px;width:200px;top:556.31px;font-size:7.9px;color:#c6c7d2;font-weight:normal;text-align:center;-webkit-text-stroke:0.15px #c6c7d2;">17:05</div>
<div class="t" style="left:631.20px;width:200px;top:556.31px;font-size:7.9px;color:#c6c7d2;font-weight:normal;text-align:center;-webkit-text-stroke:0.15px #c6c7d2;">17:10</div>
<div class="t" style="left:667.70px;width:200px;top:556.31px;font-size:7.9px;color:#c6c7d2;font-weight:normal;text-align:center;-webkit-text-stroke:0.15px #c6c7d2;">17:15</div>
<div class="t" style="left:704.20px;width:200px;top:556.31px;font-size:7.9px;color:#c6c7d2;font-weight:normal;text-align:center;-webkit-text-stroke:0.15px #c6c7d2;">17:20</div>
<div class="t" style="left:740.70px;width:200px;top:556.31px;font-size:7.9px;color:#c6c7d2;font-weight:normal;text-align:center;-webkit-text-stroke:0.15px #c6c7d2;">17:25</div>
<div class="t" style="left:777.20px;width:200px;top:556.31px;font-size:7.9px;color:#c6c7d2;font-weight:normal;text-align:center;-webkit-text-stroke:0.15px #c6c7d2;">17:30</div>
<div class="t" style="left:813.70px;width:200px;top:556.31px;font-size:7.9px;color:#c6c7d2;font-weight:normal;text-align:center;-webkit-text-stroke:0.15px #c6c7d2;">17:35</div>
<div class="t" style="left:850.20px;width:200px;top:556.31px;font-size:7.9px;color:#c6c7d2;font-weight:normal;text-align:center;-webkit-text-stroke:0.15px #c6c7d2;">17:40</div>
<div class="t" style="left:886.70px;width:200px;top:556.31px;font-size:7.9px;color:#c6c7d2;font-weight:normal;text-align:center;-webkit-text-stroke:0.15px #c6c7d2;">17:45</div>
<div class="t" style="left:923.20px;width:200px;top:556.31px;font-size:7.9px;color:#c6c7d2;font-weight:normal;text-align:center;-webkit-text-stroke:0.15px #c6c7d2;">17:50</div>
<div class="t" style="left:959.70px;width:200px;top:556.31px;font-size:7.9px;color:#c6c7d2;font-weight:normal;text-align:center;-webkit-text-stroke:0.15px #c6c7d2;">17:55</div>
<div class="t" style="left:996.20px;width:200px;top:556.31px;font-size:7.9px;color:#c6c7d2;font-weight:normal;text-align:center;-webkit-text-stroke:0.15px #c6c7d2;">18:00</div>
<div class="a" style="left:0;top:552px;width:1140px;height:1px;background:rgba(204,204,220,0.06)"></div>
<div class="a" style="left:1138px;top:44px;width:2px;height:509px;background:#17181d"></div>
</body></html>
